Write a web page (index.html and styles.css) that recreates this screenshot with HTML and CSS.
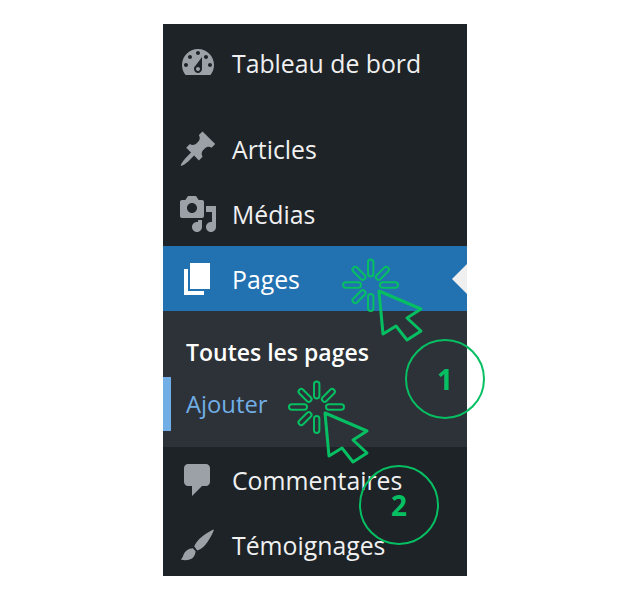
FILE: index.html
```html
<!DOCTYPE html>
<html lang="fr">
<head>
    <meta charset="UTF-8">
    <meta name="viewport" content="width=device-width, initial-scale=1.0">
    <title>Pages - Ajouter</title>
    <link rel="stylesheet" href="styles.css">
</head>
<body>
    <svg class="defs" width="0" height="0">
        <symbol id="click" viewBox="0 0 90 90">
            <g class="click-ray">
                <rect x="26" y="1.500" width="5.4" height="17" rx="2.7"/>
                <rect x="26" y="36" width="5.4" height="17" rx="2.7"/>
                <rect x="1" y="24.3" width="18" height="5.4" rx="2.7"/>
                <rect x="38" y="24.3" width="18" height="5.4" rx="2.7"/>
                <rect x="26" y="2.500" width="5.4" height="16" rx="2.7" transform="rotate(45 28.7 27)"/>
                <rect x="26" y="2.500" width="5.4" height="16" rx="2.7" transform="rotate(-45 28.7 27)"/>
                <rect x="26" y="35.500" width="5.4" height="16" rx="2.7" transform="rotate(45 28.7 27)"/>
            </g>
            <path class="click-arrow" d="M37 33L79 51L65 60L79 73L65 82L54 68L41 76Z"/>
        </symbol>
    </svg>

    <div class="page">
        <nav class="sidebar">
            <a class="item item-first">
                <svg class="icon" viewBox="0 0 20 20"><path fill-rule="evenodd" d="M3.76 16h12.48c1.1-1.37 1.76-3.11 1.76-5 0-4.42-3.58-8-8-8s-8 3.58-8 8c0 1.89.66 3.63 1.76 5zM10 4c.55 0 1 .45 1 1s-.45 1-1 1-1-.45-1-1 .45-1 1-1zM6 6c.55 0 1 .45 1 1s-.45 1-1 1-1-.45-1-1 .45-1 1-1zm8 0c.55 0 1 .45 1 1s-.45 1-1 1-1-.45-1-1 .45-1 1-1zm-5.37 5.55L12 7v6c0 1.1-.9 2-2 2s-2-.9-2-2c0-.57.24-1.08.63-1.45zM4 10c.55 0 1 .45 1 1s-.45 1-1 1-1-.45-1-1 .45-1 1-1zm12 0c.55 0 1 .45 1 1s-.45 1-1 1-1-.45-1-1 .45-1 1-1zm-5 3c0-.55-.45-1-1-1s-1 .45-1 1 .45 1 1 1 1-.45 1-1z"/></svg>
                <span>Tableau de bord</span>
            </a>
            <a class="item">
                <svg class="icon" viewBox="0 0 20 20"><path d="M10.44 3.02l1.82-1.82 6.36 6.35-1.83 1.82c-1.05-.68-2.48-.57-3.41.36l-.75.75c-.92.93-1.04 2.35-.35 3.41l-1.83 1.82-2.41-2.41-2.8 2.79c-.42.42-3.38 2.71-3.8 2.29s1.86-3.39 2.28-3.81l2.79-2.79L4.1 9.36l1.83-1.82c1.05.69 2.48.57 3.4-.36l.75-.75c.93-.92 1.05-2.35.36-3.41z"/></svg>
                <span>Articles</span>
            </a>
            <a class="item">
                <svg class="icon" viewBox="0 0 20 20"><path fill-rule="evenodd" d="M13 11V4c0-.55-.45-1-1-1h-1.67L9 1H5L3.67 3H2c-.55 0-1 .45-1 1v7c0 .55.45 1 1 1h10c.55 0 1-.45 1-1zM7 4.5c1.38 0 2.5 1.12 2.5 2.5S8.38 9.5 7 9.5 4.5 8.38 4.5 7 5.62 4.5 7 4.5zM14 6h5v10.5c0 1.38-1.12 2.5-2.5 2.5S14 17.88 14 16.5s1.12-2.5 2.5-2.5c.17 0 .34.02.5.05V9h-3V6zm-4 8.05V13h2v3.5c0 1.38-1.12 2.5-2.5 2.5S7 17.88 7 16.5 8.12 14 9.5 14c.17 0 .34.02.5.05z"/></svg>
                <span>Médias</span>
            </a>
            <a class="item item-active">
                <svg class="icon" viewBox="0 0 20 20"><path d="M6 15V2h10v13H6zm-1 1h8v2H3V5h2v11z"/></svg>
                <span>Pages</span>
            </a>
            <div class="submenu">
                <a class="sub-item sub-current">Toutes les pages</a>
                <a class="sub-item sub-add">Ajouter</a>
            </div>
            <a class="item">
                <svg class="icon" viewBox="0 0 20 20"><path d="M5 2h9c1.1 0 2 .9 2 2v7c0 1.1-.9 2-2 2h-2l-5 5v-5H5c-1.1 0-2-.9-2-2V4c0-1.1.9-2 2-2z"/></svg>
                <span>Commentaires</span>
            </a>
            <a class="item">
                <svg class="icon" viewBox="0 0 20 20"><path d="M17.600 2.200c.3.1.3.5.1.9-.9 2.100-2.400 5-4.300 7.100-1.200 1.300-2.600 2.200-3.800 2.500L8.100 10.600c.5-1.100 1.500-2.600 2.800-3.900C13 4.800 15.700 3.200 17.600 2.200zM7.400 11.600l1.400 1.500c-.1 2-1.100 3.600-3 4.200-1.400.4-3.200.4-4.400-.1.9-.7 1-1.600 1.600-2.800.7-1.500 2.400-2.700 4.400-2.800z"/></svg>
                <span>Témoignages</span>
            </a>
        </nav>

        <!-- annotations over the menu -->
        <svg class="click click-one"><use href="#click"/></svg>
        <svg class="click click-two"><use href="#click"/></svg>
        <div class="step step-one">1</div>
        <div class="step step-two">2</div>
    </div>
</body>
</html>
```

FILE: styles.css
```css
* {
    box-sizing: border-box;
}
body {
    margin: 0;
    background-color: #ffffff;
    font-family: "Open Sans", "Noto Sans", sans-serif;
}
.defs {
    display: block;
}
.page {
    position: relative;
    width: 630px;
    height: 600px;
    padding: 24px 0 0 163px;
}
.sidebar {
    width: 304px;
    height: 552px;
    background-color: #1d2327;
    overflow: hidden;
}
.item {
    position: relative;
    display: flex;
    align-items: center;
    gap: 14px;
    height: 65px;
    padding-left: 15px;
    color: #f0f0f1;
    font-size: 24.8px;
}
.item-first {
    height: 65px;
    margin: 6px 0 21px;
}
.icon {
    width: 40px;
    height: 40px;
    flex: none;
    fill: #9ca1a7;
}
.item-active {
    background-color: #2271b1;
    color: #ffffff;
}
.item-active .icon {
    fill: #ffffff;
}
.item-active::after {
    content: "";
    position: absolute;
    right: 0;
    top: 18px;
    border-top: 15px solid transparent;
    border-bottom: 15px solid transparent;
    border-right: 15px solid #f0f0f1;
}
.submenu {
    display: flex;
    flex-direction: column;
    height: 136px;
    padding-top: 14px;
    background-color: #2c3237;
}
.sub-item {
    display: flex;
    align-items: center;
    height: 53px;
    padding-left: 23px;
}
.sub-current {
    color: #ffffff;
    font-size: 23px;
    font-weight: 600;
}
.sub-add {
    height: 54px;
    margin-top: -1px;
    padding-left: 15px;
    border-left: 8px solid #72aee6;
    color: #72aee6;
    font-size: 23.8px;
}
.click {
    position: absolute;
    width: 90px;
    height: 90px;
}
.click-one {
    left: 342px;
    top: 258px;
}
.click-two {
    left: 288px;
    top: 380px;
}
.click-ray {
    fill: none;
    stroke: #07bf63;
    stroke-width: 2;
}
.click-arrow {
    fill: none;
    stroke: #07bf63;
    stroke-width: 3;
    stroke-linejoin: round;
}
.step {
    position: absolute;
    display: flex;
    align-items: center;
    justify-content: center;
    width: 80px;
    height: 80px;
    border: 2px solid #07bf63;
    border-radius: 50%;
    color: #07bf63;
    font-size: 28px;
    font-weight: 700;
}
.step-one {
    left: 405px;
    top: 339px;
}
.step-two {
    left: 359px;
    top: 465px;
}
```
